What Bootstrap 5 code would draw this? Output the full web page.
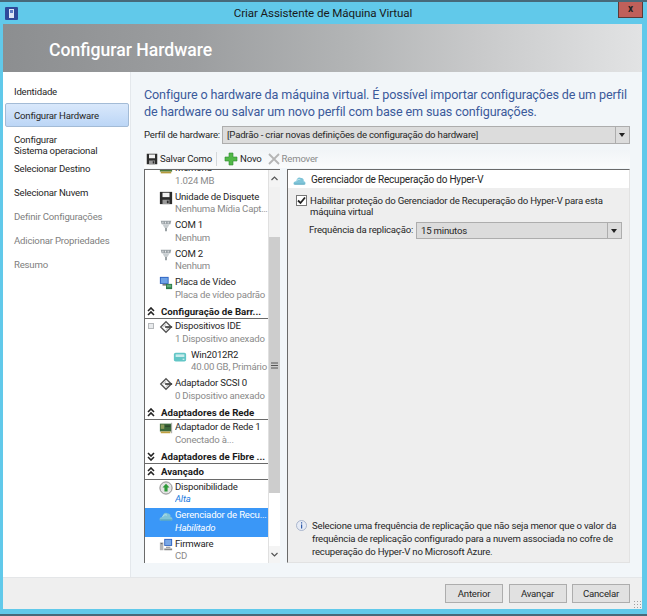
<!DOCTYPE html>
<html lang="pt">
<head>
<meta charset="UTF-8">
<title>Criar Assistente de Máquina Virtual</title>
<link href="https://cdn.jsdelivr.net/npm/bootstrap@5.3.3/dist/css/bootstrap.min.css" rel="stylesheet">
<style>
  html, body { height: 616px; overflow: hidden; }
  body { font-family: Roboto, "Noto Sans", sans-serif; font-size: 9.6px; letter-spacing: -.2px; line-height: 12.5px; color: #262626; background: #61c9ea; }
  .janela { width: 647px; height: 616px; border-top: 2px solid #47697a; border-bottom: 2px solid #47697a; }
  .barra-titulo { height: 22px; padding: 0 5px; position: relative; flex: none; }
  .barra-titulo .titulo { flex: 1; text-align: center; font-size: 11.6px; letter-spacing: -.1px; color: #1a1a1a; padding-right: 14px; }
  .app-ico { width: 13px; height: 13px; }
  .fechar { position: absolute; right: 4px; top: 0; width: 25px; height: 16px; background: #c0605a; border: 1px solid #5a3a38; border-top: 0; color: #222; font-size: 10px; font-weight: 700; line-height: 13px; text-align: center; }
  .corpo { flex: 1; min-height: 0; margin: 0 5px 5px 3px; background: #f2f6f9; }
  .cabecalho { height: 48px; flex: none; padding-left: 46px; background: linear-gradient(90deg, #8c8e90 0%, #9c9ea0 30%, #b3b5b6 55%, #c9cacb 75%, #e2e3e4 100%); color: #fff; font-size: 17.6px; letter-spacing: 0; font-weight: 500; line-height: 52px; }
  .meio { flex: 1; min-height: 0; }
  .lateral { width: 128px; flex: none; background: #fff; padding-top: 7px; border-right: 1px solid #e4e8ec; }
  .lateral .nav-link { padding: 0 0 0 8px; height: 24px; line-height: 24px; margin-left: 2px; width: 124px; color: #262626; border: 1px solid transparent; font-size: 9.6px; white-space: nowrap; }
  .lateral .nav-link.ativo { background: linear-gradient(#d9e8fb, #bcd6f6); border-color: #a3bbd6; border-radius: 2px; }
  .lateral .nav-link.duas { line-height: 11px; padding-top: 6px; height: 29px; }
  .lateral .nav-link.off { color: #808080; }
  .conteudo { flex: 1; min-width: 0; padding: 9px 12px 14px 13px; }
  .descricao { color: #3b5a9b; font-size: 12.6px; letter-spacing: -.13px; line-height: 17px; margin: 0 0 7px; height: 38px; padding-top: 5px; }
  .perfil { height: 18px; margin-bottom: 6px; flex: none; }
  .rotulo { width: 78px; flex: none; white-space: nowrap; }
  .combo { flex: 1; height: 18px; background: #dcdcdc; border: 1px solid #adadad; padding-left: 4px; line-height: 16px; position: relative; }
  .combo::after { content: ""; position: absolute; right: 0; top: 0; bottom: 0; width: 14px; border-left: 1px solid #adadad; }
  .combo::before { content: ""; position: absolute; right: 4px; top: 6px; border: 3px solid transparent; border-top: 4px solid #222; border-bottom: 0; }
  .ferramentas { height: 18px; margin-bottom: 1px; background: linear-gradient(#f1f4f7, #fbfcfc); gap: 2px; padding-left: 2px; flex: none; }
  .ferramentas .sep { width: 1px; height: 14px; background: #d5d8db; margin: 0 5px 0 2px; }
  .ferramentas .off { color: #8a8a8a; }
  .paineis { flex: 1; min-height: 0; gap: 7px; }
  .arvore { width: 136px; flex: none; background: #fff; border-top: 1px solid #6a6a6a; border-left: 1px solid #6a6a6a; overflow: hidden; }
  .lista { width: 123px; flex: none; margin-top: -9px; }
  .item { height: 28.5px; padding: 1px 0 0 30px; position: relative; }
  .item.filho { padding-left: 46px; }
  .item svg { position: absolute; left: 14px; top: 1px; width: 14px; height: 14px; }
  .item.filho svg { left: 28px; top: 2px; }
  .item .nome, .item .sub { display: block; white-space: nowrap; overflow: hidden; text-overflow: ellipsis; }
  .item .sub { color: #8a8a8a; }
  .item .sub.azul { color: #1f7de0; font-style: italic; }
  .item.sel { background: #3a97f7; color: #fff; }
  .item.sel .sub { color: #fff; font-style: italic; }
  .expansor { position: absolute; left: 3px; top: 4px; width: 6px; height: 6px; background: #e8eaec; border: 1px solid #b5b8bb; }
  .secao { height: 15.5px; font-weight: 700; font-size: 9.7px; letter-spacing: 0; border-bottom: 1px solid #6a6a6a; padding-left: 16px; line-height: 15px; position: relative; white-space: nowrap; overflow: hidden; color: #1a1a1a; }
  .secao svg { position: absolute; left: 2px; top: 3px; width: 8px; height: 9px; }
  .rolagem { width: 12px; flex: none; background: #f1f1f1; border-left: 1px solid #e0e0e0; }
  .rolagem .seta { height: 17px; background: #f4f4f4; display: flex; align-items: center; justify-content: center; flex: none; }
  .rolagem .polegar { height: 256px; margin-top: 50px; background: #cdcdcd; display: flex; align-items: center; justify-content: center; flex: none; }
  .rolagem .vazio { flex: 1; background: #fff; }
  .detalhe { flex: 1; min-width: 0; background: #eeeeee; border-top: 1px solid #6a6a6a; border-left: 1px solid #6a6a6a; border-right: 1px solid #e2e2e2; border-bottom: 1px solid #e2e2e2; }
  .detalhe-titulo { height: 18px; background: #fff; padding: 2px 0 0 5px; gap: 5px; flex: none; font-size: 10px; }
  .detalhe-corpo { padding: 7px 7px 4px 8px; flex: 1; }
  .form-check { padding: 0; margin: 0; min-height: 0; gap: 3px; }
  .form-check-input.marca { width: 11px; height: 11px; flex: none; margin: 0; border: 1px solid #777; border-radius: 0; float: none; background-color: #fff; background-image: url("data:image/svg+xml,%3csvg xmlns='http://www.w3.org/2000/svg' viewBox='0 0 11 11'%3e%3cpath d='M2 5.5l2.5 2.5L9 2.5' fill='none' stroke='%23222' stroke-width='1.8'/%3e%3c/svg%3e"); background-size: 11px 11px; }
  .form-check-label { line-height: 11px; }
  .freq { padding-left: 13px; margin-top: 5px; }
  .freq .rotulo { width: 107px; }
  .freq .combo { height: 17px; line-height: 15px; }
  .aviso { gap: 5px; margin-top: auto; line-height: 13px; padding-right: 4px; }
  .aviso svg { width: 11px; height: 11px; flex: none; margin-top: 1px; }
  .rodape { height: 32px; flex: none; background: #efefef; border-top: 1px solid #e4e6e8; padding: 6px 12px 0 0; gap: 5.5px; position: relative; }
  .rodape .btn { width: 58px; height: 19px; padding: 0; font-size: 9.6px; letter-spacing: -.2px; line-height: 16px; background: #e1e1e1; border: 1px solid #adadad; border-radius: 0; color: #262626; }
  .garra { position: absolute; right: 1px; bottom: 1px; width: 8px; height: 8px; background-image: radial-gradient(#a0a0a0 1px, transparent 1px); background-size: 3px 3px; }
</style>
</head>
<body>
<svg width="0" height="0" class="d-block position-absolute">
  <defs>
    <symbol id="i-disquete" viewBox="0 0 16 16"><path d="M1 1h14v14H1z" fill="#2c2c2c"/><path d="M4 2h8v5H4z" fill="#f2f2f2"/><path d="M4 10h8v5H4z" fill="#9a9a9a"/><path d="M9 11h2v3H9z" fill="#2c2c2c"/></symbol>
    <symbol id="i-porta" viewBox="0 0 16 16"><path d="M2 2h12l-1 4H3z" fill="#9aa2a6"/><path d="M4 6h8l-2 4H6z" fill="#c8ced1"/><path d="M7 10h2v4H7z" fill="#8d9599"/><path d="M4 3h1v2H4zM7 3h1v2H7zM10 3h1v2h-1z" fill="#eef0f1"/></symbol>
    <symbol id="i-video" viewBox="0 0 16 16"><path d="M1 1h10v8H1z" fill="#2a5fbe"/><path d="M2 2h8v6H2z" fill="#6ea2e6"/><path d="M4 9h4v2H4z" fill="#777"/><path d="M8 9h7v6H8z" fill="#2f7a4a"/><path d="M9 10h5v3H9z" fill="#5fae77"/></symbol>
    <symbol id="i-ide" viewBox="0 0 16 16"><path d="M8 2l6 6-6 6-6-6z" fill="none" stroke="#555" stroke-width="1.6"/><path d="M5 8l3-3M8 11l4-3" stroke="#bbb" stroke-width="1.2"/><path d="M7 7h8v2H7z" fill="#444"/></symbol>
    <symbol id="i-vhd" viewBox="0 0 16 16"><path d="M1 5c0-1 1-2 2-2h10c1 0 2 1 2 2v6c0 1-1 2-2 2H3c-1 0-2-1-2-2z" fill="#62c6c6"/><path d="M3 5h10v3H3z" fill="#c8ecec"/><path d="M11 10h2v1h-2z" fill="#fff"/></symbol>
    <symbol id="i-rede" viewBox="0 0 16 16"><path d="M1 3h13v9H1z" fill="#3d6b3d"/><path d="M2 4h4v5H2z" fill="#8a9a5a"/><path d="M7 5h6v2H7z" fill="#2c4a2c"/><path d="M2 12h11v2H2z" fill="#c0a040"/><path d="M14 2h1v12h-1z" fill="#999"/></symbol>
    <symbol id="i-disp" viewBox="0 0 16 16"><circle cx="8" cy="8" r="7" fill="#e4e4e4" stroke="#808080"/><path d="M8 3l4 4.500H9.800V12H6.200V7.500H4z" fill="#2f9a3a"/></symbol>
    <symbol id="i-nuvem" viewBox="0 0 16 16"><path d="M1 13c-1-3 1-4 3-4 0-3 3-6 6-4 2 0 4 2 3 4 2 0 3 2 2 4z" fill="#7fc4d8"/><path d="M4 9c1-2 3-3 5-2" fill="none" stroke="#c6e8f0"/><path d="M1 12h14l-1 1H2z" fill="#4f9fb8"/></symbol>
    <symbol id="i-firmware" viewBox="0 0 16 16"><path d="M6 1h9v8H6z" fill="#2a5fbe"/><path d="M7 2h7v6H7z" fill="#7aa8e6"/><path d="M1 5h4v9H1z" fill="#b5b5b5"/><path d="M2 6h2v1H2z" fill="#555"/><path d="M8 10h5v1H8zM6 12h9v2H6z" fill="#888"/></symbol>
    <symbol id="i-memoria" viewBox="0 0 16 16"><path d="M1 3h14v8H1z" fill="#4b7a3c"/><path d="M3 4h3v5H3zM7 4h3v5H7zM11 4h3v5h-3z" fill="#c2b45a"/><path d="M2 11h12v2H2z" fill="#b59a3c"/></symbol>
    <symbol id="i-acima" viewBox="0 0 8 9"><path d="M1 4l3-3 3 3M1 8l3-3 3 3" fill="none" stroke="#222" stroke-width="1.600"/></symbol>
    <symbol id="i-abaixo" viewBox="0 0 8 9"><path d="M1 1l3 3 3-3M1 5l3 3 3-3" fill="none" stroke="#222" stroke-width="1.600"/></symbol>
  </defs>
</svg>

<div class="janela d-flex flex-column">
  <div class="barra-titulo d-flex align-items-center">
    <svg class="app-ico" viewBox="0 0 13 13"><rect width="13" height="13" rx="1" fill="#2f4a9a"/><rect x="4" y="2" width="5" height="9" fill="#dfe6f5"/><rect x="5" y="3" width="3" height="3" fill="#5f7cc4"/></svg>
    <span class="titulo">Criar Assistente de Máquina Virtual</span>
    <div class="fechar">x</div>
  </div>

  <div class="corpo d-flex flex-column">
    <div class="cabecalho">Configurar Hardware</div>

    <div class="meio d-flex">
      <nav class="lateral nav flex-column flex-nowrap">
        <a class="nav-link">Identidade</a>
        <a class="nav-link ativo">Configurar Hardware</a>
        <a class="nav-link duas">Configurar<br>Sistema operacional</a>
        <a class="nav-link">Selecionar Destino</a>
        <a class="nav-link">Selecionar Nuvem</a>
        <a class="nav-link off">Definir Configurações</a>
        <a class="nav-link off">Adicionar Propriedades</a>
        <a class="nav-link off">Resumo</a>
      </nav>

      <div class="conteudo d-flex flex-column">
        <p class="descricao">Configure o hardware da máquina virtual. É possível importar configurações de um perfil de hardware ou salvar um novo perfil com base em suas configurações.</p>

        <div class="perfil d-flex align-items-center">
          <span class="rotulo">Perfil de hardware:</span>
          <div class="combo">[Padrão - criar novas definições de configuração do hardware]</div>
        </div>

        <div class="ferramentas d-flex align-items-center">
          <svg width="12" height="12" viewBox="0 0 16 16"><use href="#i-disquete"/></svg>
          <span>Salvar Como</span>
          <i class="sep"></i>
          <svg width="14" height="14" viewBox="0 0 14 14"><path d="M5 1h4v4h4v4H9v4H5V9H1V5h4z" fill="#52b848" stroke="#2f8a2f" stroke-width=".6"/></svg>
          <span>Novo</span>
          <svg width="12" height="12" viewBox="0 0 12 12" class="ms-1"><path d="M1 1l10 10M11 1L1 11" stroke="#b5b5b5" stroke-width="1.800"/></svg>
          <span class="off">Remover</span>
        </div>

        <div class="paineis d-flex">
          <div class="arvore d-flex">
            <div class="lista">
              <div class="item"><svg><use href="#i-memoria"/></svg><span class="nome">Memória</span><span class="sub">1.024 MB</span></div>
              <div class="item"><svg><use href="#i-disquete"/></svg><span class="nome">Unidade de Disquete</span><span class="sub">Nenhuma Mídia Captu...</span></div>
              <div class="item"><svg><use href="#i-porta"/></svg><span class="nome">COM 1</span><span class="sub">Nenhum</span></div>
              <div class="item"><svg><use href="#i-porta"/></svg><span class="nome">COM 2</span><span class="sub">Nenhum</span></div>
              <div class="item"><svg><use href="#i-video"/></svg><span class="nome">Placa de Vídeo</span><span class="sub">Placa de vídeo padrão</span></div>
              <div class="secao"><svg><use href="#i-acima"/></svg>Configuração de Barr...</div>
              <div class="item"><i class="expansor"></i><svg><use href="#i-ide"/></svg><span class="nome">Dispositivos IDE</span><span class="sub">1 Dispositivo anexado</span></div>
              <div class="item filho"><svg><use href="#i-vhd"/></svg><span class="nome">Win2012R2</span><span class="sub">40.00 GB, Primário</span></div>
              <div class="item"><svg><use href="#i-ide"/></svg><span class="nome">Adaptador SCSI 0</span><span class="sub">0 Dispositivo anexado</span></div>
              <div class="secao"><svg><use href="#i-acima"/></svg>Adaptadores de Rede</div>
              <div class="item"><svg><use href="#i-rede"/></svg><span class="nome">Adaptador de Rede 1</span><span class="sub">Conectado à...</span></div>
              <div class="secao"><svg><use href="#i-abaixo"/></svg>Adaptadores de Fibre ...</div>
              <div class="secao"><svg><use href="#i-acima"/></svg>Avançado</div>
              <div class="item"><svg><use href="#i-disp"/></svg><span class="nome">Disponibilidade</span><span class="sub azul">Alta</span></div>
              <div class="item sel"><svg><use href="#i-nuvem"/></svg><span class="nome">Gerenciador de Recu...</span><span class="sub">Habilitado</span></div>
              <div class="item"><svg><use href="#i-firmware"/></svg><span class="nome">Firmware</span><span class="sub">CD</span></div>
            </div>
            <div class="rolagem d-flex flex-column">
              <div class="seta"><svg width="7" height="5" viewBox="0 0 7 5"><path d="M.5 4l3-3 3 3" fill="none" stroke="#555" stroke-width="1.200"/></svg></div>
              <div class="polegar"><svg width="7" height="7" viewBox="0 0 7 7"><path d="M0 1h7M0 3.500h7M0 6h7" stroke="#555"/></svg></div>
              <div class="vazio"></div>
              <div class="seta"><svg width="7" height="5" viewBox="0 0 7 5"><path d="M.5 1l3 3 3-3" fill="none" stroke="#555" stroke-width="1.200"/></svg></div>
            </div>
          </div>

          <div class="detalhe d-flex flex-column">
            <div class="detalhe-titulo d-flex align-items-center">
              <svg width="13" height="13" viewBox="0 0 16 16"><use href="#i-nuvem"/></svg>
              <span>Gerenciador de Recuperação do Hyper-V</span>
            </div>
            <div class="detalhe-corpo d-flex flex-column">
              <div class="form-check d-flex">
                <input class="form-check-input marca" type="checkbox" id="habilitar" checked>
                <label class="form-check-label" for="habilitar">Habilitar proteção do Gerenciador de Recuperação do Hyper-V para esta máquina virtual</label>
              </div>
              <div class="freq d-flex align-items-center">
                <span class="rotulo">Frequência da replicação:</span>
                <div class="combo">15 minutos</div>
              </div>
              <div class="aviso d-flex">
                <svg viewBox="0 0 11 11"><circle cx="5.500" cy="5.500" r="5" fill="#e6ebf5" stroke="#9aa8c4" stroke-width=".8"/><path d="M5 2.200h1.200v1.200H5zM5 4.500h1.200v4H5z" fill="#2f5aa8"/></svg>
                <span>Selecione uma frequência de replicação que não seja menor que o valor da frequência de replicação configurado para a nuvem associada no cofre de recuperação do Hyper-V no Microsoft Azure.</span>
              </div>
            </div>
          </div>
        </div>
      </div>
    </div>

    <div class="rodape d-flex justify-content-end">
      <button class="btn" type="button">Anterior</button>
      <button class="btn" type="button">Avançar</button>
      <button class="btn" type="button">Cancelar</button>
      <i class="garra"></i>
    </div>
  </div>
</div>
<script src="https://cdn.jsdelivr.net/npm/bootstrap@5.3.3/dist/js/bootstrap.bundle.min.js"></script>
</body>
</html>
